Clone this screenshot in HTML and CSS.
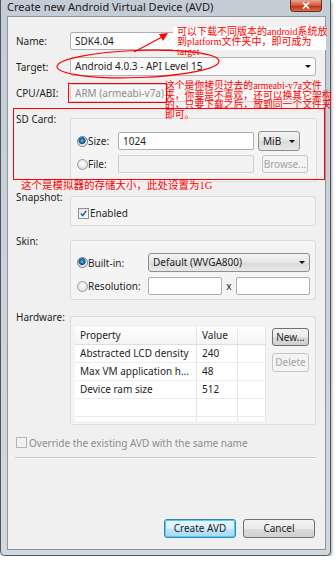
FILE: index.html
```html
<!DOCTYPE html>
<html>
<head>
    <title>Create new Android Virtual Device (AVD)</title>
    <meta name="viewport" content="width=device-width, initial-scale=1.0">
    <link rel="stylesheet" href="styles.css">
</head>
<body>
    <div class="window">
        <div class="titlebar">
            <span class="title">Create new Android Virtual Device (AVD)</span>
            <span class="close">
                <svg width="8" height="7" viewBox="0 0 8 7"><path d="M1 0.5 L7 6.5 M7 0.5 L1 6.5" stroke="white" stroke-width="1.7"/></svg>
            </span>
        </div>
        <div class="client">
            <div class="row">
                <span class="label">Name:</span>
                <div class="field">SDK4.04</div>
            </div>
            <div class="row">
                <span class="label">Target:</span>
                <div class="combo flat">Android 4.0.3 - API Level 15<span class="caret"></span></div>
            </div>
            <div class="row">
                <span class="label">CPU/ABI:</span>
                <div class="field readonly">ARM (armeabi-v7a)</div>
            </div>

            <div class="section sd">
                <span class="label">SD Card:</span>
                <div class="group">
                    <div class="sd-row">
                        <span class="radio on"></span>
                        <span>Size:</span>
                        <div class="field">1024</div>
                        <div class="combo unit">MiB<span class="caret"></span></div>
                    </div>
                    <div class="sd-row">
                        <span class="radio"></span>
                        <span>File:</span>
                        <div class="field disabled"></div>
                        <div class="btn disabled browse">Browse...</div>
                    </div>
                </div>
            </div>

            <div class="section snap">
                <span class="label">Snapshot:</span>
                <div class="group">
                    <div class="check-row">
                        <span class="check on">
                            <svg width="7" height="7" viewBox="0 0 7 7"><path d="M0.8 3.6 L2.7 5.6 L6.2 0.8" fill="none" stroke="#1d5aa8" stroke-width="1.4"/></svg>
                        </span>
                        <span>Enabled</span>
                    </div>
                </div>
            </div>

            <div class="section skin">
                <span class="label">Skin:</span>
                <div class="group">
                    <div class="skin-row">
                        <span class="radio on"></span>
                        <span>Built-in:</span>
                        <div class="combo skin-combo">Default (WVGA800)<span class="caret"></span></div>
                    </div>
                    <div class="skin-row">
                        <span class="radio"></span>
                        <span>Resolution:</span>
                        <div class="res">
                            <div class="field"></div>
                            <span class="times">x</span>
                            <div class="field"></div>
                        </div>
                    </div>
                </div>
            </div>

            <div class="section hw">
                <span class="label">Hardware:</span>
                <div class="group hw-group">
                    <div class="table">
                        <div class="tr th"><span>Property</span><span>Value</span><span></span></div>
                        <div class="tr"><span>Abstracted LCD density</span><span>240</span><span></span></div>
                        <div class="tr"><span>Max VM application h...</span><span>48</span><span></span></div>
                        <div class="tr"><span>Device ram size</span><span>512</span><span></span></div>
                        <div class="tr"><span></span><span></span><span></span></div>
                        <div class="tr last"><span></span><span></span><span></span></div>
                    </div>
                    <div class="hw-buttons">
                        <div class="btn">New...</div>
                        <div class="btn disabled">Delete</div>
                    </div>
                </div>
            </div>

            <div class="override">
                <span class="check off"></span>
                <span>Override the existing AVD with the same name</span>
            </div>
            <div class="separator"></div>

            <div class="actions">
                <div class="btn default">Create AVD</div>
                <div class="btn">Cancel</div>
            </div>
        </div>

        <!-- annotations drawn over the dialog -->
        <svg class="marks" width="336" height="562">
            <ellipse cx="137" cy="64" rx="81" ry="13.5" transform="rotate(-2 137 64)" fill="none" stroke="#f00" stroke-width="1.2"/>
            <line x1="133" y1="52" x2="161" y2="37" stroke="#f00" stroke-width="1.2"/>
            <polygon points="167,33 158,34 162,41" fill="#f00"/>
        </svg>
        <div class="note note-target">可以下载不同版本的android系统放<br>到platform文件夹中，即可成为<br>target</div>
        <div class="box box-abi"></div>
        <div class="note note-abi">这个是你拷贝过去的armeabi-v7a文件<br>夹，你要是不喜欢，还可以换其它架构<br>的，只要下载之后，放到同一个文件夹<br>即可。</div>
        <div class="box box-sd"></div>
        <div class="note note-sd">这个是模拟器的存储大小，此处设置为1G</div>
    </div>
</body>
</html>
```
FILE: styles.css
```css
:root {
    --text: #1e1e1e;
    --muted: #8d8d8d;
    --client: #f0f0f0;
    --group-border: #d9dce0;
    --field-border: #abadb3;
    --red: #ff0000;
}

body {
    margin: 0;
    background: white;
    color: var(--text);
    font-family: 'Noto Sans', sans-serif;
    font-size: 10px;
}

.window {
    position: relative;
    width: 331px;
    height: 556px;
    box-sizing: border-box;
    border: 1px solid #4f5760;
    border-top: none;
    border-radius: 0 0 5px 5px;
    padding: 0 4px 5px 6px;
    background: linear-gradient(#c4ccd6, #d2d8df);
    box-shadow: 1px 2px 3px rgba(0, 0, 0, 0.35);
    display: flex;
    flex-direction: column;
}

.titlebar {
    height: 16px;
    display: flex;
    align-items: flex-start;
}

.title {
    font-size: 11px;
    line-height: 13px;
    color: #1b1b1b;
}

.close {
    margin-left: auto;
    margin-right: 4px;
    width: 32px;
    height: 12px;
    box-sizing: border-box;
    border: 1px solid #6e2a1c;
    border-top: none;
    border-radius: 0 0 4px 4px;
    background: linear-gradient(#eba48f, #d2553a 50%, #b8331a 55%, #dc6a48);
    display: flex;
    align-items: center;
    justify-content: center;
}

.client {
    flex: 1;
    border: 1px solid #8d959d;
    background: var(--client);
    padding: 14px 9px 11px 8px;
    display: flex;
    flex-direction: column;
}

.row {
    display: grid;
    grid-template-columns: 54px 1fr;
    align-items: center;
    height: 19px;
    margin-bottom: 7px;
}

.field {
    height: 18px;
    box-sizing: border-box;
    border: 1px solid var(--field-border);
    border-radius: 2px;
    background: white;
    padding: 0 4px;
    line-height: 16px;
}

.field.readonly {
    background: #f7f7f7;
    border-color: #d0d0d0;
    color: var(--muted);
}

.field.disabled {
    background: #f2f2f2;
    border-color: #cfcfcf;
}

.combo {
    height: 19px;
    box-sizing: border-box;
    border: 1px solid #8e8f8f;
    border-radius: 3px;
    background: linear-gradient(#f4f4f4, #e6e6e6 50%, #dadada 52%, #e8e8e8);
    padding: 0 4px;
    line-height: 17px;
    display: flex;
    align-items: center;
}

.combo.flat {
    background: #fafafa;
    border-color: #b3b3b3;
}

.caret {
    margin-left: auto;
    width: 0;
    height: 0;
    border-left: 3px solid transparent;
    border-right: 3px solid transparent;
    border-top: 3px solid #111;
}

.section {
    display: grid;
    grid-template-columns: 54px 1fr;
    align-items: start;
}

.section .label {
    line-height: 10px;
    margin-top: -4px;
}

.group {
    border: 1px solid var(--group-border);
    border-radius: 3px;
    background: #f4f4f4;
}

.radio {
    width: 9px;
    height: 9px;
    border-radius: 50%;
    border: 1px solid #9a9a9a;
    background: radial-gradient(circle at 50% 40%, #ffffff, #d4d4d4);
}

.radio.on {
    background: radial-gradient(circle at 45% 40%, #8fd3ef 0, #2b7fb4 1.5px, #17507d 3px, #d9e4ea 4px, #f4f4f4 5px);
    border-color: #6b7d8a;
}

.check {
    width: 9px;
    height: 9px;
    border: 1px solid #8e8f8f;
    background: linear-gradient(#e6e6e6, #fafafa);
    display: flex;
    align-items: center;
    justify-content: center;
}

.check.off {
    border-color: #b5b5b5;
    background: #f2f2f2;
}

.btn {
    height: 19px;
    box-sizing: border-box;
    border: 1px solid #707070;
    border-radius: 3px;
    background: linear-gradient(#f2f2f2, #ebebeb 50%, #dddddd 51%, #cfcfcf);
    text-align: center;
    line-height: 17px;
}

.btn.disabled {
    border-color: #c5c5c5;
    background: #f4f4f4;
    color: #a3a3a3;
}

.btn.default {
    border-color: #3c7fb1;
    box-shadow: inset 0 0 0 1px #48d0f5;
    background: linear-gradient(#eaf6fd, #d9f0fc 50%, #bee6fd 51%, #a7d9f5);
}

/* SD card */
.sd {
    margin-top: 9px;
}

.sd .group {
    height: 64px;
    box-sizing: border-box;
    padding: 12px 8px 0 6px;
    display: flex;
    flex-direction: column;
    gap: 6px;
}

.sd-row {
    display: grid;
    grid-template-columns: 11px 30px 136px auto;
    align-items: center;
    height: 18px;
}

.unit {
    margin-left: 4px;
    width: 42px;
    height: 20px;
}

.browse {
    margin-left: 8px;
    width: 46px;
    height: 18px;
    line-height: 16px;
}

/* snapshot */
.snap {
    margin-top: 14px;
}

.snap .group {
    height: 30px;
    box-sizing: border-box;
    padding: 9px 7px 0;
}

.check-row {
    display: flex;
    align-items: center;
    gap: 1px;
    height: 14px;
}

/* skin */
.skin {
    margin-top: 14px;
}

.skin .group {
    height: 60px;
    box-sizing: border-box;
    padding: 12px 5px 0 6px;
    display: flex;
    flex-direction: column;
    gap: 6px;
}

.skin-row {
    display: grid;
    grid-template-columns: 11px 60px 1fr;
    align-items: center;
    height: 18px;
}

.skin-combo {
    height: 19px;
}

.res {
    display: grid;
    grid-template-columns: 74px 14px 74px;
    align-items: center;
}

.times {
    text-align: center;
}

/* hardware */
.hw {
    margin-top: 16px;
}

.hw-group {
    height: 109px;
    box-sizing: border-box;
    padding: 10px 6px 0 4px;
    display: flex;
    gap: 6px;
}

.table {
    width: 191px;
    height: 94px;
    overflow: hidden;
    background: white;
}

.tr {
    display: grid;
    grid-template-columns: 122px 41px 28px;
    height: 18px;
    line-height: 17px;
    border-bottom: 1px solid #ececec;
    box-sizing: border-box;
}

.tr span {
    padding-left: 5px;
    border-right: 1px solid #e6e6e6;
    white-space: nowrap;
    overflow: hidden;
}

.tr.th {
    background: linear-gradient(#ffffff, #f4f4f4);
    border-bottom-color: #dedede;
}

.hw-buttons {
    width: 37px;
    margin-top: 1px;
    display: flex;
    flex-direction: column;
    gap: 7px;
}

.hw-buttons .btn:first-child {
    height: 18px;
    line-height: 16px;
}

/* bottom */
.override {
    margin-top: 12px;
    display: flex;
    align-items: center;
    gap: 2px;
    color: var(--muted);
    height: 11px;
}

.separator {
    margin: 9px 0 0 -1px;
    border-top: 1px solid #c9c9c9;
    border-bottom: 1px solid #fbfbfb;
}

.actions {
    margin-top: auto;
    display: flex;
    justify-content: flex-end;
    gap: 7px;
    padding-right: 1px;
}

.actions .btn {
    width: 72px;
}

/* red annotations */
.marks {
    position: absolute;
    left: 0;
    top: 0;
    pointer-events: none;
}

.note {
    position: absolute;
    color: var(--red);
    font-family: 'Liberation Serif', 'Noto Sans CJK SC', serif;
    white-space: nowrap;
}

.note-target {
    left: 172px;
    top: 27px;
    width: 149px;
    height: 23px;
    padding-left: 4px;
    background: white;
    font-size: 10px;
    line-height: 10px;
}

.note-abi {
    left: 164px;
    top: 81px;
    font-size: 9.8px;
    line-height: 9.5px;
}

.note-sd {
    left: 20px;
    top: 181px;
    font-size: 10.5px;
    line-height: 10px;
}

.box {
    position: absolute;
    border: 1px solid var(--red);
}

.box-abi {
    left: 67px;
    top: 83px;
    width: 97px;
    height: 18px;
}

.box-sd {
    left: 12px;
    top: 108px;
    width: 310px;
    height: 70px;
}
```
